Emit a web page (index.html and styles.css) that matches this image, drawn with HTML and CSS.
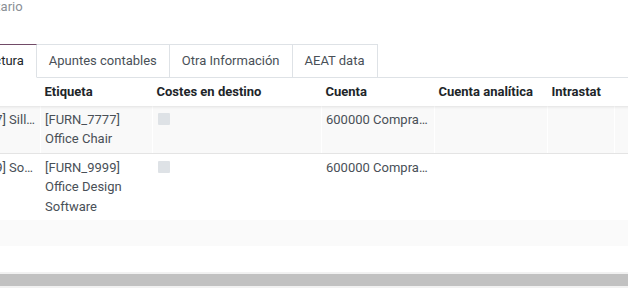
FILE: index.html
```html
<!DOCTYPE html>
<html lang="es">
<head>
<meta charset="utf-8">
<link rel="stylesheet" href="styles.css">
</head>
<body>
<div class="page">
  <div class="label">Comentario</div>
  <ul class="tabs">
    <li class="tab active">Líneas de factura</li>
    <li class="tab">Apuntes contables</li>
    <li class="tab">Otra Información</li>
    <li class="tab">AEAT data</li>
    <li class="tab-fill"></li>
  </ul>
  <div class="table-wrap">
    <table class="lines">
      <colgroup>
        <col class="c-prod">
        <col class="c-label">
        <col class="c-cost">
        <col class="c-acc">
        <col class="c-ana">
        <col class="c-intra">
        <col class="c-rest">
      </colgroup>
      <thead>
        <tr>
          <th>Producto</th>
          <th>Etiqueta</th>
          <th>Costes en destino</th>
          <th>Cuenta</th>
          <th>Cuenta analítica</th>
          <th>Intrastat</th>
          <th></th>
        </tr>
      </thead>
      <tbody>
        <tr class="striped">
          <td><div class="trunc">[FURN_7777] Silla de oficina</div></td>
          <td>[FURN_7777]<br>Office Chair</td>
          <td><span class="check"></span></td>
          <td><div class="trunc">600000 Compras de mercaderías</div></td>
          <td></td>
          <td></td>
          <td></td>
        </tr>
        <tr>
          <td><div class="trunc">[FURN_9999] Software de diseño</div></td>
          <td>[FURN_9999]<br>Office Design<br>Software</td>
          <td><span class="check"></span></td>
          <td><div class="trunc">600000 Compras de mercaderías</div></td>
          <td></td>
          <td></td>
          <td></td>
        </tr>
      </tbody>
      <tfoot>
        <tr>
          <td colspan="7">&nbsp;</td>
        </tr>
      </tfoot>
    </table>
  </div>
  <div class="hscroll"><div class="thumb"></div></div>
</div>
</body>
</html>
```
FILE: styles.css
```css
html, body {
  margin: 0;
  padding: 0;
  background: #ffffff;
}
body {
  font-family: Roboto, "Noto Sans", sans-serif;
  font-size: 13px;
  color: #495057;
  width: 628px;
  height: 295px;
  overflow: hidden;
}
.page {
  display: flex;
  flex-direction: column;
}
.label {
  color: #8a8f96;
  line-height: 20px;
  margin-top: -3px;
  margin-left: -45px;
  height: 47px;
}
.tabs {
  list-style: none;
  margin: 0 0 0 -89px;
  padding: 0;
  display: flex;
  height: 34px;
}
.tab {
  box-sizing: border-box;
  padding: 0 12px;
  line-height: 31px;
  border: 1px solid #dee2e6;
  border-left: none;
  color: #495057;
  white-space: nowrap;
}
.tab:first-child {
  border-left: 1px solid #dee2e6;
}
.tab.active {
  color: #212529;
  border-top: 1px solid #714b67;
  border-bottom-color: transparent;
  background: #fff;
}
.tab-fill {
  flex: 1;
  border-bottom: 1px solid #dee2e6;
}
.table-wrap {
  overflow: hidden;
}
.lines {
  border-collapse: collapse;
  table-layout: fixed;
  width: 794px;
  margin-left: -74px;
}
.c-prod { width: 114px; }
.c-label { width: 112px; }
.c-cost { width: 169px; }
.c-acc { width: 113px; }
.c-ana { width: 113px; }
.c-intra { width: 67px; }
.c-rest { width: 106px; }
.lines th {
  text-align: left;
  font-weight: 700;
  color: #212529;
  padding: 4px 4px 4px 4px;
  line-height: 19.5px;
  white-space: nowrap;
  overflow: hidden;
}
.lines thead tr {
  box-shadow: 0 1px 3px rgba(0, 0, 0, 0.10);
  position: relative;
}
.lines td {
  padding: 4px 4px 4px 4px;
  line-height: 19.5px;
  vertical-align: top;
  border-left: 1px solid #ffffff;
  overflow: hidden;
}
.lines tbody tr {
  border-bottom: 1px solid #e7e7e7;
}
.lines tbody tr:last-child {
  border-bottom: none;
}
.lines tr.striped td {
  background: #f9f9f9;
  border-bottom: 1px solid #e4e4e4;
}
.lines tr.striped td + td {
  border-left: 1px solid #ffffff;
}
.lines tfoot td {
  background: #fafafa;
  padding: 3px 4px;
  border-left: none;
}
.trunc {
  white-space: nowrap;
  overflow: hidden;
  text-overflow: ellipsis;
}
.check {
  display: block;
  width: 12px;
  height: 12px;
  margin: 3px 0 0 1px;
  background: #dee2e6;
  border-radius: 1px;
}
.hscroll {
  margin-top: 26px;
  height: 16px;
  background: #f1f1f1;
  box-sizing: border-box;
  padding: 2px 0;
}
.thumb {
  height: 12px;
  background: #c1c1c1;
}
```
